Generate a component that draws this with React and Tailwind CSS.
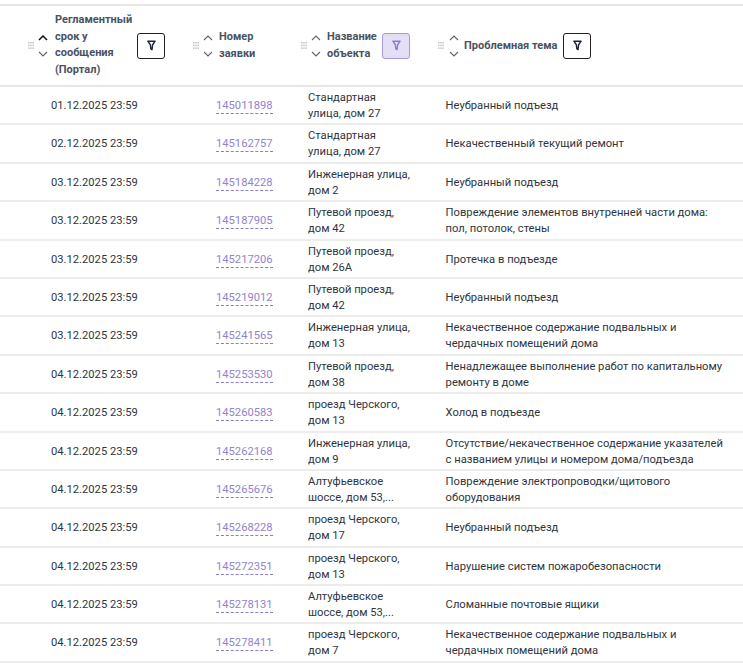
import React from "react";

const rows = [
  ["01.12.2025 23:59", "145011898", "Стандартная улица, дом 27", "Неубранный подъезд"],
  ["02.12.2025 23:59", "145162757", "Стандартная улица, дом 27", "Некачественный текущий ремонт"],
  ["03.12.2025 23:59", "145184228", "Инженерная улица, дом 2", "Неубранный подъезд"],
  ["03.12.2025 23:59", "145187905", "Путевой проезд, дом 42", "Повреждение элементов внутренней части дома: пол, потолок, стены"],
  ["03.12.2025 23:59", "145217206", "Путевой проезд, дом 26А", "Протечка в подъезде"],
  ["03.12.2025 23:59", "145219012", "Путевой проезд, дом 42", "Неубранный подъезд"],
  ["03.12.2025 23:59", "145241565", "Инженерная улица, дом 13", "Некачественное содержание подвальных и чердачных помещений дома"],
  ["04.12.2025 23:59", "145253530", "Путевой проезд, дом 38", "Ненадлежащее выполнение работ по капитальному ремонту в доме"],
  ["04.12.2025 23:59", "145260583", "проезд Черского, дом 13", "Холод в подъезде"],
  ["04.12.2025 23:59", "145262168", "Инженерная улица, дом 9", "Отсутствие/некачественное содержание указателей с названием улицы и номером дома/подъезда"],
  ["04.12.2025 23:59", "145265676", "Алтуфьевское шоссе, дом 53,...", "Повреждение электропроводки/щитового оборудования"],
  ["04.12.2025 23:59", "145268228", "проезд Черского, дом 17", "Неубранный подъезд"],
  ["04.12.2025 23:59", "145272351", "проезд Черского, дом 13", "Нарушение систем пожаробезопасности"],
  ["04.12.2025 23:59", "145278131", "Алтуфьевское шоссе, дом 53,...", "Сломанные почтовые ящики"],
  ["04.12.2025 23:59", "145278411", "проезд Черского, дом 7", "Некачественное содержание подвальных и чердачных помещений дома"],
  ["04.12.2025 23:59", "145278590", "Путевой проезд, дом 42", "Повреждение элементов внутренней части дома: пол, потолок, стены"],
];

function Grip() {
  return (
    <svg width="6" height="7" viewBox="0 0 6 7" className="shrink-0 text-[#c4c4c4]" fill="currentColor">
      <rect x="0" y="0" width="1.5" height="1.5" /><rect x="2.2" y="0" width="1.5" height="1.5" /><rect x="4.4" y="0" width="1.5" height="1.5" />
      <rect x="0" y="2.7" width="1.5" height="1.5" /><rect x="2.2" y="2.7" width="1.5" height="1.5" /><rect x="4.4" y="2.7" width="1.5" height="1.5" />
      <rect x="0" y="5.4" width="1.5" height="1.5" /><rect x="2.2" y="5.4" width="1.5" height="1.5" /><rect x="4.4" y="5.4" width="1.5" height="1.5" />
    </svg>
  );
}

function Sort({ active }) {
  return (
    <div className="flex flex-col gap-[10px] shrink-0">
      <svg width="10" height="6" viewBox="0 0 10 6" fill="none" stroke={active ? "#111111" : "#5b6472"} strokeWidth={active ? 1.5 : 1.1}><path d="M1 5l4-4 4 4" /></svg>
      <svg width="10" height="6" viewBox="0 0 10 6" fill="none" stroke="#5b6472" strokeWidth="1.1"><path d="M1 1l4 4 4-4" /></svg>
    </div>
  );
}

function FilterBtn({ on }) {
  return (
    <div className={on ? "w-[28px] h-[26px] shrink-0 rounded-[3px] border border-[#a899dc] bg-[#e4dff5] flex items-center justify-center" : "w-[28px] h-[26px] shrink-0 rounded-[3px] border border-[#222222] bg-white flex items-center justify-center"}>
      <svg width="9" height="11" viewBox="0 0 10 12" fill="none" stroke={on ? "#8d7bcf" : "#1c2530"} strokeWidth="1.6" strokeLinejoin="round">
        <path d="M1 1.2h8L6.2 5.4 5.6 10.6 4.2 9.6 3.8 5.4z" />
      </svg>
    </div>
  );
}

function Cell({ className, children }) {
  return <div className={"shrink-0 flex items-center " + className}>{children}</div>;
}

export default function App() {
  return (
    <div className="w-[743px] h-[668px] overflow-hidden bg-white pt-[4px] text-[11.2px] leading-[16px] text-[#2f3540] font-['Roboto',sans-serif]">
      <div className="flex h-[83px] border-y-2 border-[#e6e6e6] items-center text-[11px] font-bold text-[#4a5261]">
        <div className="w-[193px] shrink-0 pl-[28px] flex items-center">
          <Grip />
          <div className="ml-[4px]"><Sort active /></div>
          <div className="ml-[7px] w-[82px] leading-[16.5px] -mt-[1px]">Регламентный срок у сообщения (Портал)</div>
          <FilterBtn />
        </div>
        <div className="w-[108px] shrink-0 flex items-center">
          <Grip />
          <div className="ml-[4px]"><Sort /></div>
          <div className="ml-[6px] leading-[16.5px]">Номер<br />заявки</div>
        </div>
        <div className="w-[137px] shrink-0 flex items-center">
          <Grip />
          <div className="ml-[4px]"><Sort /></div>
          <div className="ml-[6px] w-[55px] leading-[16.5px]">Название объекта</div>
          <FilterBtn on />
        </div>
        <div className="flex items-center">
          <Grip />
          <div className="ml-[5px]"><Sort /></div>
          <div className="ml-[5px] mr-[6px]">Проблемная тема</div>
          <FilterBtn />
        </div>
      </div>
      {rows.map((r) => (
        <div key={r[1]} className="flex h-[38.4px] border-b-2 border-[#ececec] pt-[1.6px]">
          <Cell className="w-[216px] pl-[51px]">{r[0]}</Cell>
          <Cell className="w-[92px]">
            <span className="text-[#9184cc] border-b border-dashed border-[#8d7bcf] leading-[15px]">{r[1]}</span>
          </Cell>
          <Cell className="w-[137.6px]"><div className="w-[103px]">{r[2]}</div></Cell>
          <Cell className="w-[297px]"><div className="w-[281px]">{r[3]}</div></Cell>
        </div>
      ))}
    </div>
  );
}
